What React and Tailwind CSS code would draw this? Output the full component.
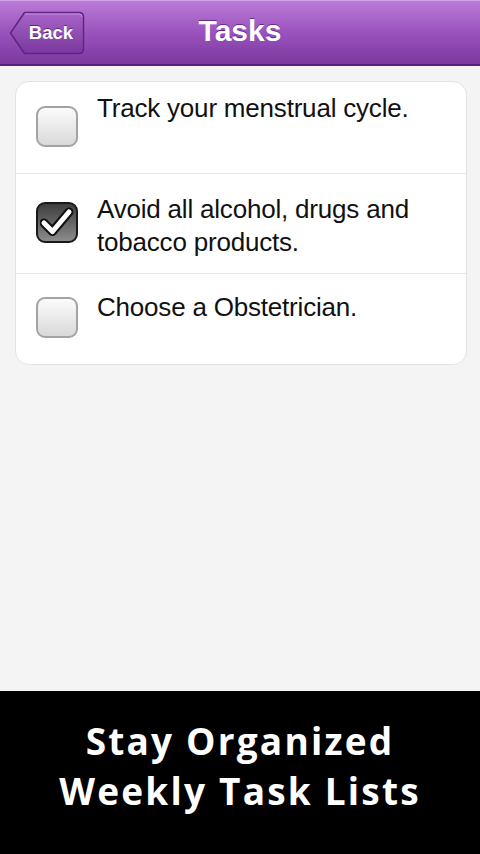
const tasks = [
  { id: 1, text: "Track your menstrual cycle.", done: false, rowCls: "h-[91px]", textCls: "pt-[10px]" },
  { id: 2, text: "Avoid all alcohol, drugs and tobacco products.", done: true, rowCls: "h-[100px]", textCls: "pt-[19px]" },
  { id: 3, text: "Choose a Obstetrician.", done: false, rowCls: "h-[91px]", textCls: "pt-[17px]" },
];

const CheckBox = ({ checked }) => {
  if (checked) {
    return (
      <div className="w-[42px] h-[41px] shrink-0 rounded-[9px] border-2 border-[#1a1a1a] bg-gradient-to-b from-[#3f3f3f] to-[#8c8c8c] flex items-center justify-center">
        <svg width="34" height="30" viewBox="0 0 34 30">
          <path
            d="M4 16 L12.5 24.5 L29 5"
            fill="none"
            stroke="#111"
            strokeWidth="9"
            strokeLinecap="round"
            strokeLinejoin="round"
          />
          <path
            d="M4 16 L12.5 24.5 L29 5"
            fill="none"
            stroke="#fff"
            strokeWidth="5"
            strokeLinecap="round"
            strokeLinejoin="round"
          />
        </svg>
      </div>
    );
  }
  return (
    <div className="w-[42px] h-[41px] shrink-0 rounded-[9px] border-2 border-[#a3a3a3] bg-gradient-to-b from-[#fbfbfb] to-[#d9d9d9]" />
  );
};

const BackButton = () => (
  <button className="relative w-[76px] h-[44px] ml-[9px] flex items-center justify-end pr-[12px]">
    <svg className="absolute inset-0" width="76" height="44" viewBox="0 0 76 44">
      <defs>
        <linearGradient id="bk" x1="0" y1="0" x2="0" y2="1">
          <stop offset="0" stopColor="#a864c8" />
          <stop offset="1" stopColor="#7a389d" />
        </linearGradient>
      </defs>
      <path
        d="M15.5 1.5 H70 Q74.5 1.5 74.5 6 V38 Q74.5 42.5 70 42.5 H15.5 L1.5 22 Z"
        fill="url(#bk)"
        stroke="#62257f"
        strokeWidth="1.5"
        strokeLinejoin="round"
      />
      <path d="M16 3 H70 Q73 3 73 6" fill="none" stroke="#c58de0" strokeWidth="1" />
    </svg>
    <span className="relative text-white font-bold text-[18.5px] [text-shadow:0_-1px_0_rgba(60,10,80,0.6)]">
      Back
    </span>
  </button>
);

export default function App() {
  return (
    <div className="w-[480px] h-[854px] flex flex-col bg-[#f4f4f4] font-['Liberation_Sans',Arial,sans-serif]">
      <header className="h-[66px] shrink-0 relative flex items-center bg-gradient-to-b from-[#bb7bd8] via-[#9a52bd] to-[#7c399f] border-t border-t-[#d2a3e6] border-b-2 border-b-[#5b2079]">
        <BackButton />
        <h1 className="absolute left-0 right-0 top-[13px] text-center text-white font-bold text-[30px] leading-[34px] pointer-events-none [text-shadow:0_-1px_0_rgba(60,10,80,0.6)]">
          Tasks
        </h1>
      </header>

      <main className="flex-1 px-[15px] pt-[15px]">
        <div className="w-[452px] bg-white rounded-[14px] border border-[#e3e3e3] overflow-hidden">
          {tasks.map((t, i) => (
            <div
              key={t.id}
              className={`flex items-center ${t.rowCls} ${i > 0 ? "border-t border-[#e6e6e6]" : ""}`}
            >
              <div className="w-[81px] shrink-0 pl-[20px] -mt-[3px]">
                <CheckBox checked={t.done} />
              </div>
              <p className={`self-start ${t.textCls} text-[26px] leading-[33px] text-[#111] pr-[36px] tracking-[-0.2px]`}>
                {t.text}
              </p>
            </div>
          ))}
        </div>
      </main>

      <footer className="h-[163px] shrink-0 bg-black flex flex-col items-center justify-center pb-[14px]">
        <p className="text-white font-bold text-[37px] leading-[50px] font-['Open_Sans',sans-serif] tracking-[2.2px]">
          Stay Organized
        </p>
        <p className="text-white font-bold text-[37px] leading-[50px] font-['Open_Sans',sans-serif] tracking-[2.2px]">
          Weekly Task Lists
        </p>
      </footer>
    </div>
  );
}
